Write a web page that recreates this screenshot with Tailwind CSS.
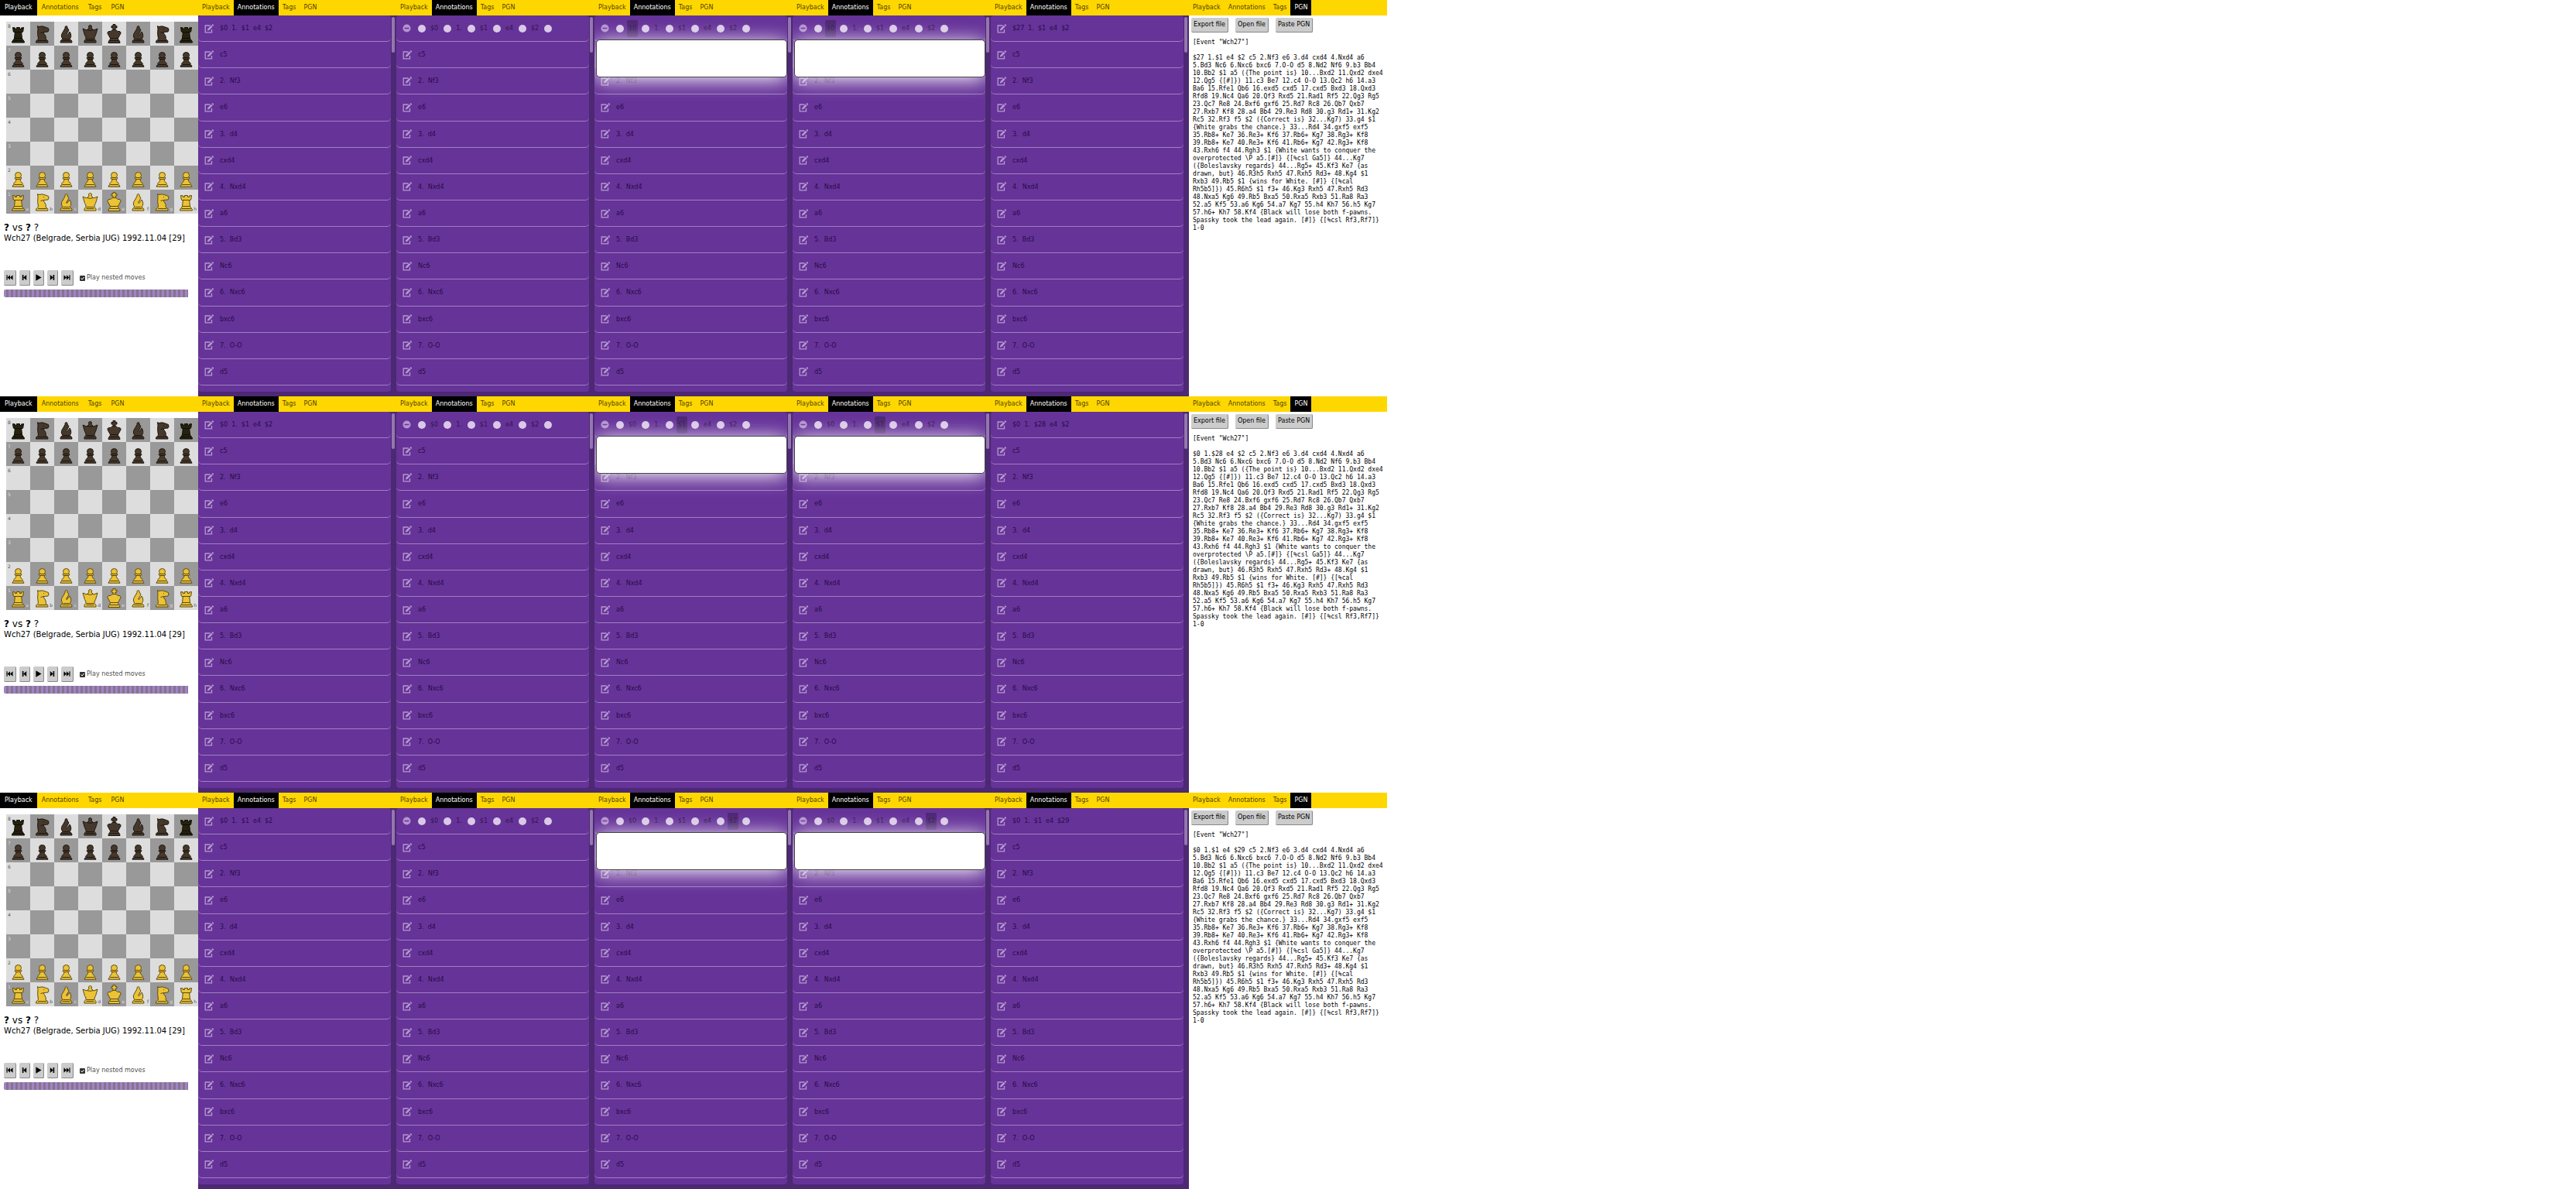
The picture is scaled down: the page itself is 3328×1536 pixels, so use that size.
<!DOCTYPE html>
<html lang="en">
<head>
<meta charset="utf-8">
<title>Chess game viewer</title>
<script src="https://cdn.jsdelivr.net/npm/@tailwindcss/browser@4"></script>
</head>
<body class="bg-white font-['DejaVu_Sans',sans-serif] text-[8px] leading-[10px] text-black">
<svg class="hidden">
  <defs>
    <symbol id="pawn" viewBox="0 0 31 31"><path d="M11.500 12.500a4 4 0 1 1 8 0q0 1.200-1.200 2.200l1.400.6v1.600l-1.700.7c.3 2.600 1.700 4.100 3.500 5.500l-1 1.400q2.500.4 2.500 2.700h-15q0-2.300 2.500-2.700l-1-1.400c1.800-1.400 3.200-2.900 3.500-5.500l-1.700-.7v-1.600l1.400-.6q-1.200-1-1.200-2.200z"/><path d="M12.500 15.500h6M12.500 17.500h6M11 24.500h9" fill="none"/></symbol>
    <symbol id="rook" viewBox="0 0 31 31"><path d="M8.500 7.500l3 .5v1.500h2v-2h4v2h2V8l3-.5-.8 5.500-2 1 .8 7.500 1.500 2.500q1.500.6 1.500 3h-16q0-2.400 1.500-3l1.500-2.500.8-7.500-2-1z"/><path d="M10 13.500h11M10.500 21.500h10M9.500 24.500h12" fill="none"/></symbol>
    <symbol id="knight" viewBox="0 0 31 31"><path d="M9.500 5.500l1.500 1q5-1.500 8.500.5l4 1.500.5 2.500-1 2-5.500.5q-.5 1.500 1.500 3.500 2 2.500 1 5.500l2 1.500q1 .8 1 3H7.500q0-2.200 1-3l2-1.500q-1.500-8-.5-13z"/><path d="M10 24.500h11M17 9.500l1 .3M13.500 14.500l4-1" fill="none"/></symbol>
    <symbol id="bishop" viewBox="0 0 31 31"><path d="M15.500 5.500q2 .3 1.500 2.500l2 3-3.500 6 1 .5 3.700-4.500q3.300 6-.2 9.500l2 1.500q1 .7 1 3h-15q0-2.300 1-3l2-1.500q-3.500-4.500.5-9.500l2.500-4.500q-.5-2.500 1.500-3z"/><path d="M10.500 24.500h10M11.500 22.500h8" fill="none"/></symbol>
    <symbol id="queen" viewBox="0 0 31 31"><path d="M15.500 4.500a2 2 0 0 1 1.300 3.500l3.200 3 5-2-2.500 8.500q-2 2.500-1.500 5l1.500 1.500q1 1 .5 3h-15q-.5-2 .5-3l1.500-1.500q.5-2.500-1.500-5L6 9l5 2 3.200-3a2 2 0 0 1 1.300-3.500z"/><path d="M10.500 22.500h10M10.500 24.500h10M12 10.500q3.500 2 7 0" fill="none"/></symbol>
    <symbol id="king" viewBox="0 0 31 31"><path d="M14 3.500h3v2h2v2.500h-2v2.500q2 .5 3 2 4.500-.5 4 2.500l-3.500 6.500.5 2q2 .7 2 4h-15q0-3.300 2-4l.5-2L7 15q-.5-3 4-2.500 1-1.500 3-2V8h-2V5.500h2z"/><path d="M10.500 21.500h10M9.500 24.500h12M14 10.500h3" fill="none"/></symbol>
    <symbol id="edit" viewBox="0 0 12 12"><path d="M7.500 2H1.200v8.800h8.300V7" fill="none" stroke="currentColor" stroke-width="1.300"/><path d="M3.800 8.600l.6-2.400 4.400-4.400 1.800 1.800L6.200 8z M9.400 1.200L10.300.3q.4-.3.700 0l1 1q.3.400 0 .7l-.8 1z" fill="currentColor"/></symbol>
    <symbol id="minus" viewBox="0 0 12 12"><circle cx="6" cy="6" r="5.500" fill="#b494cf"/><path d="M2.800 6h6.400" stroke="#663399" stroke-width="1.500"/></symbol>
    <symbol id="first" viewBox="0 0 10 10"><path d="M.5 1.500h1.300v7H.5zM1.800 5l3.800-3.500v7zM5.600 5l3.900-3.500v7z"/></symbol>
    <symbol id="prev" viewBox="0 0 10 10"><path d="M2 1.200h1.800v7.600H2zM3.600 5l4.400-3.800v7.600z"/></symbol>
    <symbol id="play" viewBox="0 0 10 10"><path d="M1.500.3L9.500 5 1.500 9.700z"/></symbol>
    <symbol id="next" viewBox="0 0 10 10"><path d="M8 1.200H6.200v7.600H8zM6.400 5L2 1.200v7.600z"/></symbol>
    <symbol id="last" viewBox="0 0 10 10"><path d="M9.500 1.500H8.200v7h1.300zM8.200 5L4.400 1.500v7zM4.400 5L.5 1.500v7z"/></symbol>
  </defs>
</svg>
<main id="app"></main>
<script>
const MOVES = ['c5', '2. Nf3', 'e6', '3. d4', 'cxd4', '4. Nxd4', 'a6', '5. Bd3', 'Nc6', '6. Nxc6', 'bxc6', '7. O-O', 'd5'];
const BACK = ['rook', 'knight', 'bishop', 'queen', 'king', 'bishop', 'knight', 'rook'];
const REST = `5.Bd3 Nc6 6.Nxc6 bxc6 7.O-O d5 8.Nd2 Nf6 9.b3 Bb4
10.Bb2 $1 a5 ({The point is} 10...Bxd2 11.Qxd2 dxe4
12.Qg5 {[#]}) 11.c3 Be7 12.c4 O-O 13.Qc2 h6 14.a3
Ba6 15.Rfe1 Qb6 16.exd5 cxd5 17.cxd5 Bxd3 18.Qxd3
Rfd8 19.Nc4 Qa6 20.Qf3 Rxd5 21.Rad1 Rf5 22.Qg3 Rg5
23.Qc7 Re8 24.Bxf6 gxf6 25.Rd7 Rc8 26.Qb7 Qxb7
27.Rxb7 Kf8 28.a4 Bb4 29.Re3 Rd8 30.g3 Rd1+ 31.Kg2
Rc5 32.Rf3 f5 $2 ({Correct is} 32...Kg7) 33.g4 $1
{White grabs the chance.} 33...Rd4 34.gxf5 exf5
35.Rb8+ Ke7 36.Re3+ Kf6 37.Rb6+ Kg7 38.Rg3+ Kf8
39.Rb8+ Ke7 40.Re3+ Kf6 41.Rb6+ Kg7 42.Rg3+ Kf8
43.Rxh6 f4 44.Rgh3 $1 {White wants to conquer the
overprotected \\P a5.[#]} {[%csl Ga5]} 44...Kg7
({Boleslavsky regards} 44...Rg5+ 45.Kf3 Ke7 {as
drawn, but} 46.R3h5 Rxh5 47.Rxh5 Rd3+ 48.Kg4 $1
Rxb3 49.Rb5 $1 {wins for White. [#]} {[%cal
Rh5b5]}) 45.R6h5 $1 f3+ 46.Kg3 Rxh5 47.Rxh5 Rd3
48.Nxa5 Kg6 49.Rb5 Bxa5 50.Rxa5 Rxb3 51.Ra8 Ra3
52.a5 Kf5 53.a6 Kg6 54.a7 Kg7 55.h4 Kh7 56.h5 Kg7
57.h6+ Kh7 58.Kf4 {Black will lose both f-pawns.
Spassky took the lead again. [#]} {[%csl Rf3,Rf7]}
1-0`;

const tabs = (active) => {
  const pad = active === 'Playback' ? 'px-[6px]' : 'px-[5px]';
  return `<nav class="flex h-5 shrink-0 bg-[#ffd700] leading-5">${['Playback', 'Annotations', 'Tags', 'PGN'].map(t =>
    `<a href="#" class="${pad} ${t === active ? 'bg-black text-white' : 'text-black/75'}">${t}</a>`).join('')}</nav>`;
};

const panel = (active, body) => `<section class="flex min-w-0 flex-col">${tabs(active)}${body}</section>`;

const icon = (id, cls) => `<svg class="${cls}"><use href="#${id}"/></svg>`;

function board() {
  let cells = '';
  for (let r = 0; r < 8; r++) for (let c = 0; c < 8; c++) {
    const dark = (r + c) % 2;
    const piece = r === 0 || r === 7 ? BACK[c] : r === 1 || r === 6 ? 'pawn' : '';
    const tone = r > 3 ? 'size-full fill-[#ebc334] stroke-[#5c4a14]'
      : piece === 'rook' ? 'size-full fill-[#26220f] stroke-[#0f0d04]' : 'size-full fill-[#46392c] stroke-[#1c150f]';
    cells += `<div class="relative aspect-square text-[6px] leading-[8px] ${dark ? 'bg-[#999] text-[#ddd]' : 'bg-[#ddd] text-[#555]'}">
      ${piece ? icon(piece, tone) : ''}
      ${c === 0 ? `<span class="absolute left-[2px] top-[2px]">${8 - r}</span>` : ''}
      ${r === 7 ? `<span class="absolute bottom-[2px] right-[2px]">${'abcdefgh'[c]}</span>` : ''}</div>`;
  }
  return `<div class="mt-2 ml-2 grid grid-cols-8">${cells}</div>`;
}

const playback = () => panel('Playback', `${board()}
  <div class="px-[5px] pt-[11px]">
    <h2 class="text-[12px] leading-[14px]"><b>?</b> vs <b>?</b> ?</h2>
    <p class="text-[10px] leading-[14px] whitespace-nowrap">Wch27 (Belgrade, Serbia JUG) 1992.11.04 [29]</p>
    <div class="mt-[34px] flex items-center gap-1">
      ${['first', 'prev', 'play', 'next', 'last'].map(n => `<button aria-label="${n}" class="flex h-5 items-center justify-center rounded-xs border-r border-b border-[#888] bg-[#ccc] ${n === 'first' || n === 'last' ? 'w-4' : 'w-[14px]'}">${icon(n, 'size-[9px] shrink-0')}</button>`).join('')}
      <label class="ml-1 flex items-center gap-[2px] whitespace-nowrap text-black/75"><span class="relative flex size-[7px]"><input type="checkbox" checked class="size-[7px] appearance-none rounded-[1px] bg-[#333]"><svg class="pointer-events-none absolute inset-0 size-[7px]" viewBox="0 0 7 7"><path d="M1.500 3.500l1.500 1.500 2.600-3" fill="none" stroke="#fff"/></svg></span>Play nested moves</label>
    </div>
    <div class="mt-[5px] mr-2 h-[10px] rounded-l-xs bg-[repeating-linear-gradient(90deg,#a283c4_0_3px,#84748f_3px_6px)]"></div>
  </div>`);

const row = (text) => `<li class="flex flex-1 items-center rounded-b-[5px] border-b border-[#a080c0] pl-2">
  <button aria-label="Edit" class="mr-2 text-[#b59ace]">${icon('edit', 'block size-3')}</button>
  <span class="flex gap-[5px] pt-px text-[#260b45]">${text.split(' ').map(t => `<span>${t}</span>`).join('')}</span></li>`;

const dot = '<button aria-label="Insert" class="ml-px size-[10px] rounded-full bg-[#d9c9e6]"></button>';

const editRow = (selected) => `<li class="flex flex-1 items-center gap-1 rounded-b-[5px] border-b border-[#a080c0] pl-2 text-[#321450]">
  <button aria-label="Close" class="mr-1">${icon('minus', 'block size-[11px]')}</button>${dot}
  ${['$0', '1.', '$1', 'e4', '$2'].map(t => `<span class="px-[2px] py-[6px] ${t === selected ? 'rounded-xs bg-black/25' : ''}">${t}</span>${dot}`).join('')}</li>`;

const annotations = (first, popup) => panel('Annotations', `<div class="flex flex-1 bg-[#4d2873] pb-[6px]">
  <div class="relative flex min-w-0 flex-1 flex-col overflow-hidden rounded-sm bg-[#663399] pb-2">
    <ul class="flex flex-1 flex-col">${first}${MOVES.map(row).join('')}</ul>
    ${popup ? '<textarea aria-label="Annotation" class="absolute inset-x-0 top-[31px] ml-[2px] h-[49px] w-[calc(100%-2px)] resize-none rounded-[5px] border border-[#444] bg-white shadow-[0_3px_26px_#fff]"></textarea>' : ''}
  </div>
  <div class="w-[7px] pt-[2px] pl-px"><div class="h-[46px] w-1 rounded-full bg-[#9377ae]"></div></div></div>`);

const pgn = (head) => panel('PGN', `<div class="flex gap-[9px] pt-[3px] pl-[3px]">
    ${['Export file', 'Open file', 'Paste PGN'].map(t => `<button class="rounded-xs border-r border-b border-[#888] bg-[#ccc] px-[3px] py-1 whitespace-nowrap">${t}</button>`).join('')}</div>
  <pre class="mt-2 pl-[5px] font-['DejaVu_Sans_Mono',monospace] text-[8px] leading-[10px]">[Event "Wch27"]

${head} c5 2.Nf3 e6 3.d4 cxd4 4.Nxd4 a6
${REST}</pre>`);

const RUNS = [
  { selected: '$0', result: '$27 1. $1 e4 $2', head: '$27 1.$1 e4 $2' },
  { selected: '$1', result: '$0 1. $28 e4 $2', head: '$0 1.$28 e4 $2' },
  { selected: '$2', result: '$0 1. $1 e4 $29', head: '$0 1.$1 e4 $29' },
];

document.getElementById('app').innerHTML = RUNS.map(r => `<div class="grid min-h-128 grid-cols-13">
  ${playback()}${annotations(row('$0 1. $1 e4 $2'))}${annotations(editRow())}
  ${annotations(editRow(r.selected), true)}${annotations(editRow(r.selected), true)}
  ${annotations(row(r.result))}${pgn(r.head)}</div>`).join('');
</script>
</body>
</html>
